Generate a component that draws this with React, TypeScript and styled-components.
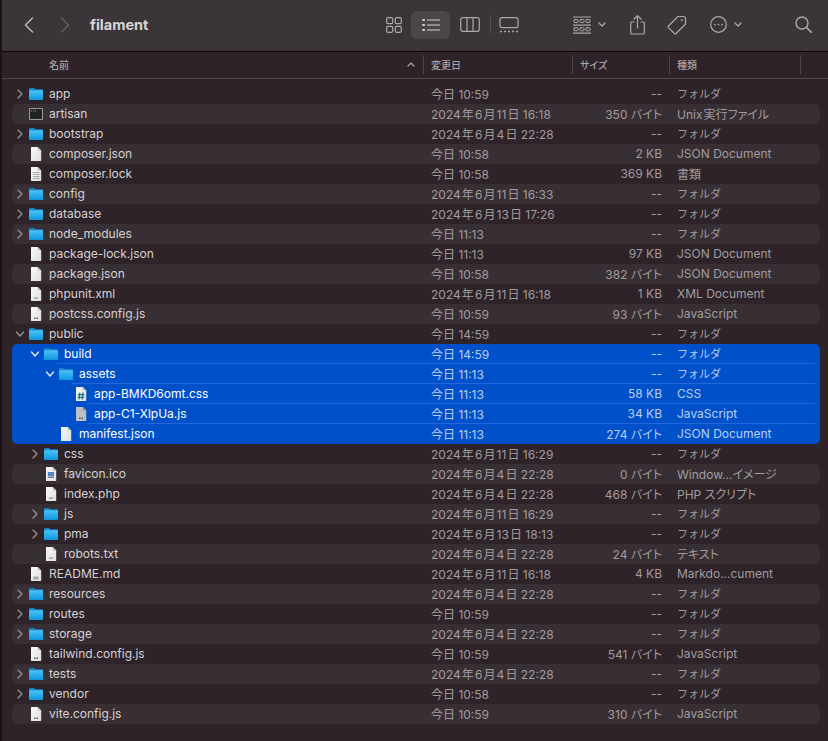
import React from "react";
import styled, { createGlobalStyle } from "styled-components";

type IconKind = "folder" | "term" | "page" | "lined" | "js" | "php" | "css" | "jsDim" | "ico" | "md";

interface Entry {
  name: string;
  date: string;
  size: string;
  kind: string;
  depth?: number;
  icon: IconKind;
  arrow?: "open" | "closed";
  sep?: number;
}

const FOLDER = "フォルダ";
const JSON_DOC = "JSON Document";

// finder puts only a sliver of space around the date kanji
const jpDate = (m: number, d: number, time: string) => `2024\u200a年\u200a${m}\u200a月\u200a${d}\u200a日 ${time}`;
const bytes = (n: number) => `${n} バイト`;

const before: Entry[] = [
  { name: "app", date: "今日 10:59", size: "--", kind: FOLDER, icon: "folder", arrow: "closed" },
  { name: "artisan", date: jpDate(6, 11, "16:18"), size: bytes(350), kind: "Unix\u200a実行ファイル", icon: "term" },
  { name: "bootstrap", date: jpDate(6, 4, "22:28"), size: "--", kind: FOLDER, icon: "folder", arrow: "closed" },
  { name: "composer.json", date: "今日 10:58", size: "2 KB", kind: JSON_DOC, icon: "page" },
  { name: "composer.lock", date: "今日 10:58", size: "369 KB", kind: "書類", icon: "lined" },
  { name: "config", date: jpDate(6, 11, "16:33"), size: "--", kind: FOLDER, icon: "folder", arrow: "closed" },
  { name: "database", date: jpDate(6, 13, "17:26"), size: "--", kind: FOLDER, icon: "folder", arrow: "closed" },
  { name: "node_modules", date: "今日 11:13", size: "--", kind: FOLDER, icon: "folder", arrow: "closed" },
  { name: "package-lock.json", date: "今日 11:13", size: "97 KB", kind: JSON_DOC, icon: "page" },
  { name: "package.json", date: "今日 10:58", size: bytes(382), kind: JSON_DOC, icon: "page" },
  { name: "phpunit.xml", date: jpDate(6, 11, "16:18"), size: "1 KB", kind: "XML Document", icon: "php" },
  { name: "postcss.config.js", date: "今日 10:59", size: bytes(93), kind: "JavaScript", icon: "js" },
  { name: "public", date: "今日 14:59", size: "--", kind: FOLDER, icon: "folder", arrow: "open" },
];

const selected: Entry[] = [
  { name: "build", date: "今日 14:59", size: "--", kind: FOLDER, depth: 1, icon: "folder", arrow: "open", sep: 45 },
  { name: "assets", date: "今日 11:13", size: "--", kind: FOLDER, depth: 2, icon: "folder", arrow: "open", sep: 60 },
  { name: "app-BMKD6omt.css", date: "今日 11:13", size: "58 KB", kind: "CSS", depth: 3, icon: "css", sep: 75 },
  { name: "app-C1-XlpUa.js", date: "今日 11:13", size: "34 KB", kind: "JavaScript", depth: 3, icon: "jsDim", sep: 75 },
  { name: "manifest.json", date: "今日 11:13", size: bytes(274), kind: JSON_DOC, depth: 2, icon: "page" },
];

const after: Entry[] = [
  { name: "css", date: jpDate(6, 11, "16:29"), size: "--", kind: FOLDER, depth: 1, icon: "folder", arrow: "closed" },
  { name: "favicon.ico", date: jpDate(6, 4, "22:28"), size: bytes(0), kind: "Window...イメージ", depth: 1, icon: "ico" },
  { name: "index.php", date: jpDate(6, 4, "22:28"), size: bytes(468), kind: "PHP スクリプト", depth: 1, icon: "php" },
  { name: "js", date: jpDate(6, 11, "16:29"), size: "--", kind: FOLDER, depth: 1, icon: "folder", arrow: "closed" },
  { name: "pma", date: jpDate(6, 13, "18:13"), size: "--", kind: FOLDER, depth: 1, icon: "folder", arrow: "closed" },
  { name: "robots.txt", date: jpDate(6, 4, "22:28"), size: bytes(24), kind: "テキスト", depth: 1, icon: "php" },
  { name: "README.md", date: jpDate(6, 11, "16:18"), size: "4 KB", kind: "Markdo...cument", icon: "md" },
  { name: "resources", date: jpDate(6, 4, "22:28"), size: "--", kind: FOLDER, icon: "folder", arrow: "closed" },
  { name: "routes", date: "今日 10:59", size: "--", kind: FOLDER, icon: "folder", arrow: "closed" },
  { name: "storage", date: jpDate(6, 4, "22:28"), size: "--", kind: FOLDER, icon: "folder", arrow: "closed" },
  { name: "tailwind.config.js", date: "今日 10:59", size: bytes(541), kind: "JavaScript", icon: "js" },
  { name: "tests", date: jpDate(6, 4, "22:28"), size: "--", kind: FOLDER, icon: "folder", arrow: "closed" },
  { name: "vendor", date: "今日 10:58", size: "--", kind: FOLDER, icon: "folder", arrow: "closed" },
  { name: "vite.config.js", date: "今日 10:59", size: bytes(310), kind: "JavaScript", icon: "js" },
];

const GlobalStyle = createGlobalStyle`
  html, body {
    margin: 0;
    background: #2d2329;
  }
  body {
    font-family: Inter, "Noto Sans CJK JP", sans-serif;
    font-feature-settings: "palt";
    -webkit-font-smoothing: antialiased;
  }
`;

const Window = styled.div`
  width: 828px;
  height: 741px;
  box-sizing: border-box;
  border-left: 2px solid #1c1219;
  background: #2d2329;
  overflow: hidden;
`;

const Toolbar = styled.div`
  height: 49px;
  display: flex;
  align-items: center;
  padding: 0 8px 2px 12px;
  background: #3b3539;
  border-bottom: 1px solid #0e0a0c;
`;

const Slot = styled.div<{ $w: number; $ml?: number; $active?: boolean }>`
  width: ${(p) => p.$w}px;
  height: 28px;
  margin-left: ${(p) => p.$ml ?? 0}px;
  flex: none;
  display: flex;
  align-items: center;
  justify-content: center;
  gap: 7px;
  border-radius: 6px;
  background: ${(p) => (p.$active ? "#4b464a" : "transparent")};
  color: #aca7aa;
`;

const Title = styled.div`
  flex: 1;
  margin-left: 10px;
  font-size: 14.5px;
  font-weight: 700;
  color: #d8d5d6;
`;

const ToolDivider = styled.div`
  width: 1px;
  height: 19px;
  flex: none;
  background: #514c4f;
`;

const Grid = styled.div`
  display: grid;
  grid-template-columns: 411px 149px 97px 151px;
  align-items: center;
`;

const Header = styled(Grid)`
  height: 24px;
  grid-template-columns: 411px 149px 97px 131px 20px;
  padding: 0 8px 2px 10px;
  border-bottom: 1px solid #4c4449;
  font-size: 10px;
  font-weight: 500;
  color: #a8a2a5;
`;

const HeadCell = styled.div<{ $first?: boolean }>`
  height: 19px;
  display: flex;
  align-items: center;
  justify-content: space-between;
  box-sizing: border-box;
  padding: 0 8px 0 7px;
  border-left: ${(p) => (p.$first ? "none" : "1px solid #4c4449")};
  ${(p) => p.$first && "padding-left: 37px;"}
`;

const List = styled.div`
  padding: 5px 8px 0 10px;
`;

const SelectedBlock = styled.div`
  border-radius: 5px;
  background: #0050c9;
`;

const Row = styled(Grid)<{ $striped?: boolean; $sep?: number }>`
  height: 20px;
  border-radius: 5px;
  font-size: 12px;
  color: #a29c9f;
  background-color: ${(p) => (p.$striped ? "#382f34" : "transparent")};
  ${(p) =>
    p.$sep !== undefined &&
    `
    background-image: linear-gradient(#2267dc, #2267dc);
    background-repeat: no-repeat;
    background-position: ${p.$sep}px bottom;
    background-size: ${803 - p.$sep}px 1px;
  `}
`;

const SelectedRow = styled(Row)`
  color: #b9cff2;
`;

const NameCell = styled.div<{ $depth: number; $selected?: boolean }>`
  display: flex;
  align-items: center;
  padding-left: ${(p) => p.$depth * 15}px;
  color: ${(p) => (p.$selected ? "#ffffff" : "#d5d1d3")};
`;

const NameText = styled.span`
  padding-bottom: 2px;
`;

const ArrowBox = styled.div`
  width: 16px;
  height: 20px;
  flex: none;
  display: flex;
  align-items: center;
  justify-content: center;
`;

const IconBox = styled.div`
  width: 16px;
  height: 16px;
  flex: none;
  margin-right: 5px;
`;

const DateCell = styled.div`
  padding: 0 0 2px 8px;
  white-space: nowrap;
`;

const SizeCell = styled.div`
  padding: 0 7px 2px 0;
  text-align: right;
  white-space: nowrap;
`;

const KindCell = styled.div<{ $folder?: boolean }>`
  padding: 0 0 2px 8px;
  white-space: nowrap;
  ${(p) => p.$folder && `font-size: 11px; font-feature-settings: normal;`}
`;

const Svg = styled.svg`
  display: block;
  fill: none;
  stroke: currentColor;
  stroke-width: 1.2;
  stroke-linecap: round;
  stroke-linejoin: round;
`;

const Caret = ({ w = 8 }: { w?: number }) => (
  <Svg width={w} height="5" viewBox="0 0 8 5">
    <path d="M1 1l3 3 3-3" strokeWidth="1.4" />
  </Svg>
);

const Arrow = ({ open, light }: { open: boolean; light: boolean }) => (
  <Svg width="10" height="10" viewBox="0 0 10 10" style={{ color: light ? "#e6eeff" : "#98918f" }}>
    {open ? <path d="M1.5 3l3.5 4 3.5-4" strokeWidth="1.3" /> : <path d="M3 1l4 4-4 4" strokeWidth="1.3" />}
  </Svg>
);

function FolderIcon() {
  return (
    <svg width="16" height="16" viewBox="0 0 16 16">
      <defs>
        <linearGradient id="folderFill" x1="0" y1="0" x2="0" y2="1">
          <stop offset="0" stopColor="#4cc2f8" />
          <stop offset="1" stopColor="#0f97df" />
        </linearGradient>
      </defs>
      <path d="M1 3.600C1 2.700 1.600 2 2.500 2H6l1.400 1.300H14c.6 0 1 .4 1 1V13c0 .6-.4 1-1 1H2c-.6 0-1-.4-1-1z" fill="#1a86c8" />
      <path d="M1 4.900c0-.4.3-.7.7-.7h12.600c.4 0 .7.3.7.7V13c0 .6-.4 1-1 1H2c-.6 0-1-.4-1-1z" fill="url(#folderFill)" />
    </svg>
  );
}

function TerminalIcon() {
  return (
    <svg width="16" height="16" viewBox="0 0 16 16">
      <rect x="1" y="2" width="14" height="12" rx="1" fill="#9a9a9c" />
      <rect x="2" y="3" width="12" height="10" fill="#1f2423" />
      <path d="M3 5h1M5 5h1M7 5h1" stroke="#45d072" strokeWidth="0.9" />
    </svg>
  );
}

function PageIcon({ kind }: { kind: IconKind }) {
  const dim = kind === "jsDim";
  return (
    <svg width="16" height="16" viewBox="0 0 16 16">
      <defs>
        <linearGradient id="pageFill" x1="0" y1="0" x2="1" y2="1">
          <stop offset="0" stopColor="#fafafa" />
          <stop offset="1" stopColor="#dedede" />
        </linearGradient>
      </defs>
      <path d="M3 1h6.700l3.500 3.500V15H3z" fill={dim ? "#bcbfc4" : "url(#pageFill)"} />
      <path d="M9.700 1v3.500h3.500z" fill={dim ? "#8f9399" : "#c4c4c4"} />
      {kind === "lined" && <path d="M4.800 6.500h6.700M4.800 8.500h6.700M4.800 10.500h6.700M4.800 12.500h6.700" stroke="#9a9a9a" strokeWidth="0.8" />}
      {(kind === "js" || kind === "jsDim") && <path d="M6 12.200h1.400M8.400 12.200h1.600" stroke="#55585c" strokeWidth="1.400" />}
      {kind === "php" && <rect x="5.800" y="11.500" width="4" height="1.200" fill="#8b8b8b" />}
      {kind === "css" && (
        <path d="M6.800 6.500l-.8 7M10 6.500l-.8 7M4.800 8.600h6.600M4.500 11.400h6.600" stroke="#1d6f86" strokeWidth="1.200" fill="none" />
      )}
      {kind === "ico" && (
        <>
          <rect x="4.800" y="6" width="6.200" height="4.500" fill="#4f86c6" />
          <path d="M4.800 11.500h6.200" stroke="#777" strokeWidth="1" />
        </>
      )}
      {kind === "md" && <rect x="5.300" y="10.500" width="5" height="3" fill="#a8a8a8" />}
    </svg>
  );
}

function EntryIcon({ kind }: { kind: IconKind }) {
  if (kind === "folder") return <FolderIcon />;
  if (kind === "term") return <TerminalIcon />;
  return <PageIcon kind={kind} />;
}

function FileRow({ entry, striped, isSelected }: { entry: Entry; striped?: boolean; isSelected?: boolean }) {
  const RowTag = isSelected ? SelectedRow : Row;
  return (
    <RowTag $striped={striped} $sep={entry.sep}>
      <NameCell $depth={entry.depth ?? 0} $selected={isSelected}>
        <ArrowBox>{entry.arrow && <Arrow open={entry.arrow === "open"} light={!!isSelected} />}</ArrowBox>
        <IconBox>
          <EntryIcon kind={entry.icon} />
        </IconBox>
        <NameText>{entry.name}</NameText>
      </NameCell>
      <DateCell>{entry.date}</DateCell>
      <SizeCell>{entry.size}</SizeCell>
      <KindCell $folder={entry.kind === FOLDER}>{entry.kind}</KindCell>
    </RowTag>
  );
}

export default function App() {
  return (
    <>
      <GlobalStyle />
      <Window>
        <Toolbar>
          <Slot $w={30}>
            <Svg width="10" height="16" viewBox="0 0 10 16" style={{ color: "#bcb8ba" }}>
              <path d="M8.500 1L1.500 8l7 7" strokeWidth="1.500" />
            </Svg>
          </Slot>
          <Slot $w={30} $ml={6}>
            <Svg width="10" height="16" viewBox="0 0 10 16" style={{ color: "#645f62" }}>
              <path d="M1.500 1l7 7-7 7" strokeWidth="1.500" />
            </Svg>
          </Slot>
          <Title>filament</Title>
          <Slot $w={35}>
            <Svg width="16" height="16" viewBox="0 0 16 16">
              <rect x="0.700" y="0.700" width="6" height="6" rx="1.200" />
              <rect x="9.300" y="0.700" width="6" height="6" rx="1.200" />
              <rect x="0.700" y="9.300" width="6" height="6" rx="1.200" />
              <rect x="9.300" y="9.300" width="6" height="6" rx="1.200" />
            </Svg>
          </Slot>
          <Slot $w={39} $active>
            <Svg width="18" height="14" viewBox="0 0 18 14" style={{ color: "#d2cfd0" }}>
              <path d="M5.500 2h12M5.500 7h12M5.500 12h12" />
              <path d="M1 2h1.200M1 7h1.200M1 12h1.200" strokeWidth="1.800" />
            </Svg>
          </Slot>
          <Slot $w={40}>
            <Svg width="20" height="15" viewBox="0 0 20 15">
              <rect x="0.700" y="0.700" width="18.600" height="13.600" rx="2" />
              <path d="M7 0.700v13.600M13 0.700v13.600" />
            </Svg>
          </Slot>
          <ToolDivider />
          <Slot $w={36}>
            <Svg width="20" height="16" viewBox="0 0 20 16">
              <rect x="1" y="0.700" width="18" height="10" rx="2" />
              <path d="M1 14.500h2M5 14.500h2M9 14.500h2M13 14.500h2M17 14.500h2" strokeWidth="1.600" strokeLinecap="butt" />
            </Svg>
          </Slot>
          <Slot $w={45} $ml={40}>
            <Svg width="18" height="18" viewBox="0 0 18 18">
              <path d="M0 1h18M0 9.200h18M0 17.200h18" strokeLinecap="butt" />
              <rect x="1" y="3.600" width="4" height="3" rx="0.600" strokeWidth="1" />
              <rect x="7" y="3.600" width="4" height="3" rx="0.600" strokeWidth="1" />
              <rect x="13" y="3.600" width="4" height="3" rx="0.600" strokeWidth="1" />
              <rect x="1" y="11.800" width="4" height="3" rx="0.600" strokeWidth="1" />
              <rect x="7" y="11.800" width="4" height="3" rx="0.600" strokeWidth="1" />
              <rect x="13" y="11.800" width="4" height="3" rx="0.600" strokeWidth="1" />
            </Svg>
            <Caret />
          </Slot>
          <Slot $w={33} $ml={9}>
            <Svg width="15" height="20" viewBox="0 0 15 20">
              <path d="M4 7H1.500c-.5 0-.8.3-.8.8v10.400c0 .5.3.8.8.8h12c.5 0 .8-.3.8-.8V7.800c0-.5-.3-.8-.8-.8H11" />
              <path d="M7.500 13V1M4 4l3.500-3.300L11 4" />
            </Svg>
          </Slot>
          <Slot $w={33} $ml={6}>
            <Svg width="20" height="20" viewBox="0 0 20 20">
              <path d="M11 1.500h5.500c1.100 0 2 .9 2 2V9L9 18.500c-.5.5-1.100.5-1.600 0L1.500 12.600c-.5-.5-.5-1.100 0-1.600z" />
              <circle cx="14.800" cy="5.200" r="0.700" fill="currentColor" strokeWidth="0.500" />
            </Svg>
          </Slot>
          <Slot $w={48} $ml={9}>
            <Svg width="17" height="17" viewBox="0 0 17 17">
              <circle cx="8.500" cy="8.500" r="7.800" />
              <path d="M5 8.500h.1M8.500 8.500h.1M12 8.500h.1" strokeWidth="1.700" />
            </Svg>
            <Caret />
          </Slot>
          <Slot $w={34} $ml={36}>
            <Svg width="17" height="17" viewBox="0 0 17 17">
              <circle cx="7" cy="7" r="6" strokeWidth="1.400" />
              <path d="M11.500 11.500l5 5" strokeWidth="1.600" />
            </Svg>
          </Slot>
        </Toolbar>
        <Header>
          <HeadCell $first>
            名前
            <Svg width="8" height="5" viewBox="0 0 8 5">
              <path d="M1 4l3-3 3 3" />
            </Svg>
          </HeadCell>
          <HeadCell>変更日</HeadCell>
          <HeadCell>サイズ</HeadCell>
          <HeadCell>種類</HeadCell>
          <HeadCell />
        </Header>
        <List>
          {before.map((e, i) => (
            <FileRow key={e.name} entry={e} striped={i % 2 === 1} />
          ))}
          <SelectedBlock>
            {selected.map((e) => (
              <FileRow key={e.name} entry={e} isSelected />
            ))}
          </SelectedBlock>
          {after.map((e, i) => (
            <FileRow key={e.name} entry={e} striped={i % 2 === 1} />
          ))}
        </List>
      </Window>
    </>
  );
}
